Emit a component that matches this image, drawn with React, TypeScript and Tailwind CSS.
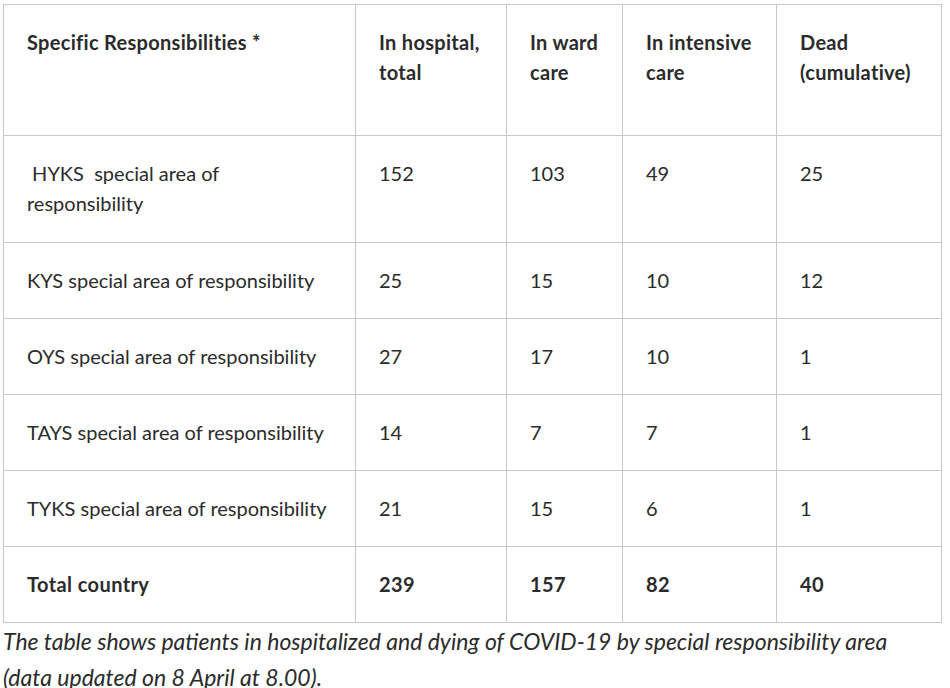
import React from "react";

const rows = [
  { name: "\u00a0HYKS\u00a0 special area of responsibility", v: ["152", "103", "49", "25"], h: "h-[107px]" },
  { name: "KYS special area of responsibility", v: ["25", "15", "10", "12"], h: "" },
  { name: "OYS special area of responsibility", v: ["27", "17", "10", "1"], h: "" },
  { name: "TAYS special area of responsibility", v: ["14", "7", "7", "1"], h: "" },
  { name: "TYKS special area of responsibility", v: ["21", "15", "6", "1"], h: "" },
];

const headers: string[][] = [
  ["Specific Responsibilities *"],
  ["In hospital,", "total"],
  ["In ward", "care"],
  ["In intensive", "care"],
  ["Dead", "(cumulative)"],
];

export default function App() {
  const cell = "border border-[#c8c8c8] pl-[23px] pr-6 pt-[22px] pb-[23px] align-top";
  const hcell = "border border-[#c8c8c8] pl-[23px] pr-0 pt-[22px] pb-[23px] align-top whitespace-nowrap";
  return (
    <div
      className="w-[950px] h-[688px] bg-white overflow-hidden pl-[3px] pt-[4px] text-[#2b2b2b]"
      style={{ fontFamily: '"Lato", "Noto Sans", sans-serif' }}
    >
      <table className="table-fixed border-collapse w-[939px] text-[20px] leading-[30px]">
        <colgroup>
          <col className="w-[352px]" />
          <col className="w-[151px]" />
          <col className="w-[116px]" />
          <col className="w-[154px]" />
          <col className="w-[165px]" />
        </colgroup>
        <thead>
          <tr className="h-[131px] font-bold tracking-[0.3px]">
            {headers.map((h, i) => (
              <td key={i} className={hcell}>
                {h.map((line, j) => (
                  <div key={j}>{line}</div>
                ))}
              </td>
            ))}
          </tr>
        </thead>
        <tbody>
          {rows.map((r) => (
            <tr key={r.name} className={r.h}>
              <td className={cell}>{r.name}</td>
              {r.v.map((x, i) => (
                <td key={i} className={cell}>
                  {x}
                </td>
              ))}
            </tr>
          ))}
          <tr className="font-bold tracking-[0.4px]">
            <td className={cell}>Total country</td>
            <td className={cell}>239</td>
            <td className={cell}>157</td>
            <td className={cell}>82</td>
            <td className={cell}>40</td>
          </tr>
        </tbody>
      </table>
      <p className="italic text-[23px] leading-[36px] w-[915px]">
        The table shows patients in hospitalized and dying of COVID-19 by special responsibility area (data updated on 8 April at 8.00).
      </p>
    </div>
  );
}
